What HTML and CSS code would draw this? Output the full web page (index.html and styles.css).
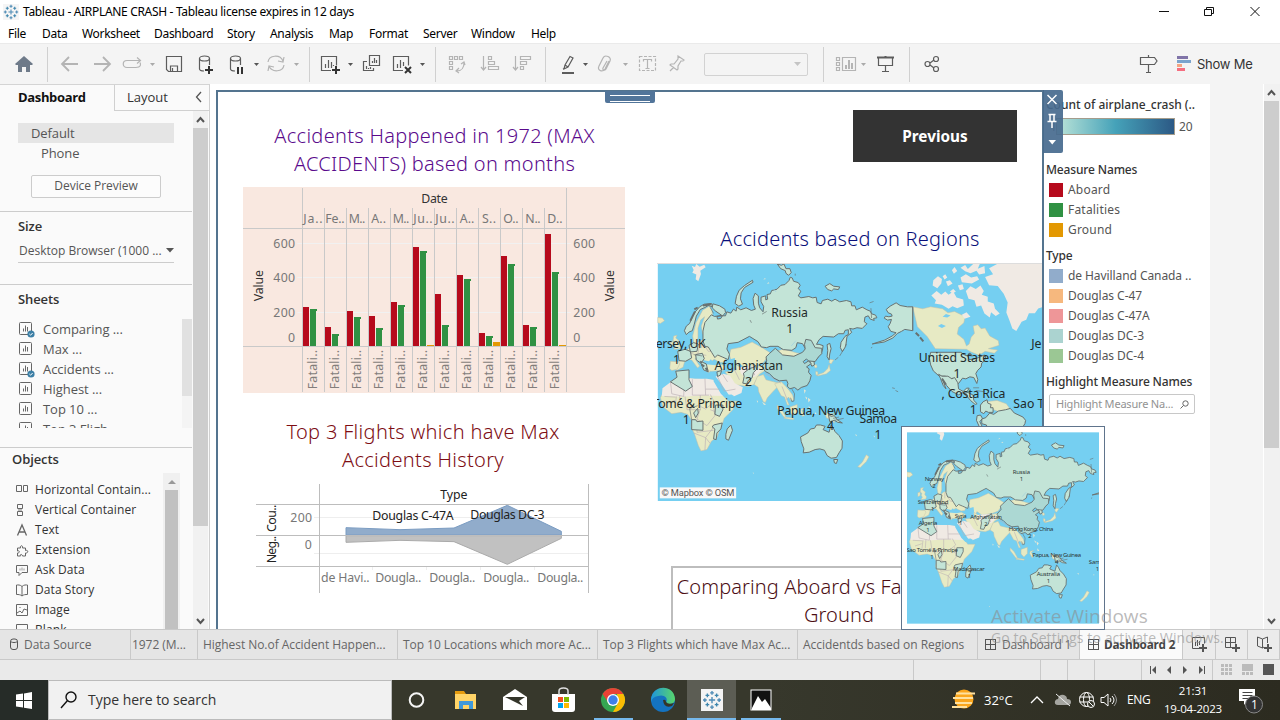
FILE: index.html
```html
<!DOCTYPE html>
<html lang="en">
<head>
<meta charset="utf-8">
<title>Tableau - AIRPLANE CRASH</title>
<link rel="stylesheet" href="styles.css">
</head>
<body>
<svg class="defs" width="0" height="0">
  <defs>
    <g id="snow" stroke-width="1.1" fill="none">
      <path stroke="#4e8bb5" d="M8 5.500v5M5.500 8h5M8 .8v3M6.500 2.300h3M8 12.200v3M6.500 13.700h3M.8 8h3M2.300 6.500v3M12.200 8h3M13.700 6.500v3"/>
      <path stroke="#3e86ad" d="M4.300 2.800v3M2.800 4.300h3M11.700 2.800v3M10.200 4.300h3M4.300 10.200v3M2.800 11.700h3M11.700 10.200v3M10.200 11.700h3"/>
    </g>
    <g id="sheet" fill="none" stroke="#666"><rect x=".5" y="1.500" width="12" height="12" rx="1"/><path d="M4.500 7.500v3M6.500 4.500v6M8.500 6v4.500"/></g>
    <g id="check"><circle cx="12" cy="13" r="3.600" fill="#3c7fa5"/><path d="M10.400 13l1.200 1.200 2-2.200" stroke="#fff" fill="none"/></g>
    <path id="tri" d="M0 0h5L2.500 3z"/>
    <g id="world" stroke-linejoin="round">
      <g fill="#e7eac4" stroke="#c3bfa5" stroke-width="1.500">
        <path d="M131 372l-4-24 10-40 20-38 20-12 8 12 4 34-6 26-14 10-12 2-4-24 10-28-12 10-8 24 0 30-6 22z"/>
        <path d="M84 398l24-6 14-14 16-6 12-10 26-6 12 10 12 20 18 20 10 4-4 16-14 2-18-10-16 12 8 20-8 8-12-8-10-24-12-14-8 4 14 22-6 6-18-24-14-2-8 10-4 14-20 10-8-16 8-10 16-4z"/>
        <path d="M60 424l24 2 4 6-8 16-16 4-6-6zM70 348l10-2-4 8 10 8-2 8 6 8-2 8-18 2 6-8-4-6 2-8-6-4zM60 364l8-2 0 12-8 4z"/>
        <path d="M158 436l24-8 30 4 14 8-8 12-34 2-24-4z"/>
        <path d="M238 405l4-17 30-6 34-16 32 18 22 14-10 16-10 14-20 8-36 6-18-12-6 14-14-10z"/>
        <path d="M375 395l26-8 40 12 26 4-2 12-36 14-36-4z"/>
        <path d="M255 432l24 16 22-6 38-6 6 16-18 12-16 30-16 6-44-6-26-38 18-2 16-4z"/>
        <path d="M322 470l18-6 8 16 46 12 4 14-16-4-12 12-18 20-6 14-6-2-14-30-2-14-12-8z"/>
        <path d="M374 492l20-6 14 14 10 12 10 14 4 14-8 4-8-12-6 6 8 18-6 0-8-24-10-4-10-18z"/>
        <path d="M382 556l14 14 12 22-6 0-20-26zM404 592l28 4-2 4-28-4zM420 562l22-8 0 22-12 12-10-10zM452 568l12-2-8 6 8 16-6 2-8-14zM524 576l12 6 16 0 2 28-12-10-12-6z"/>
        <path d="M42 510l26-20 32-14 38 2 34 2 24 2 18 34 20 28 26 0-12 26-26 26-8 24-8 16-6 18-16 10-14 26-18 4-8-16-12-36-10-20 2-20-12-18-20-6-28 4-26-20-8-28z"/>
        <path d="M790 260l30 6 24-6 36 6 16 12 20-4 20 10 12 4-4 20-16 14-4 20 20 16 8 20 8-6 6-20 10-12-4-22 14-4 10 12 12-2 14 24 26 14 2 14-32 10 28 4-10 10-28-6-18 12-24-10-14-8-94-2-24-36-30-30z"/>
        <path d="M1010 546l34-4 28 10 10 14-22 14-36-14z"/>
        <path d="M492 436l8-2 2 8-6 2zM540 418l12 2-8 12-6-4zM538 434l4 18-12 10-24 6-6-2 22-8 12-12zM498 454l6 2 0 12-6-4zM650 706l8 6-8 14-18 18-8-2 14-14zM22 292l14 2 6 8-12 8-8-2z"/>
      </g>
      <g fill="#f0eae4">
        <path d="M1008 170l24-8-12-18 24-13h136v130l-12 4-10 14-18 0-8 20-14 6-16 28-12-8-8-22-10-26 4-30-12-26-18-24-26-2z"/>
        <path d="M124 136l10 4 4-9 10 8 14-6 4 8-16 10 2 10-8 22-8-6 2-14-12-6 4-8z"/>
        <path d="M852 180l14-12 12 8-2 14-12 14-14-8zM880 168l8-6 6 10-8 6zM846 226l16-14 14 12 12-10 10 10 14-10 10 18 20 6 2 18-20 8-14-6-12 8-20-12-22-4 4-10zM890 184l12-4 8 10-14 8zM908 150l8-10 8 12-10 8zM926 196l14-4 4 14-12 4zM934 172l16-10 16 10 18-4 6 10-22 12-30-4zM934 142l14-8 8 12 16-15 20 0-6 14 20-8 2 22-18 4-8-12-18 8-16-6zM950 212l14-14 16 8 14-10 10 16-6 12 18 6 0 14 18 6 4 16 14 14-12 8-14-12-4 16-16-12-10-24-14 4-6-20-18-4zM938 284l14-8 12 14-18 6zM902 214l10-8 8 8-10 6z"/>
        <path d="M36 505l30-22 34-10 34 4 36 0 26 4 16 28 10 20-66-2-60 4-62-2zM196 470l24-8 20 6 14 22 24 12-4 18-24 10-14-4-24-36z"/>
        <path d="M268 442l36-4 34 10-22 22-28 6-16-16zM384 415l40-6 30 4-32 12-28-2z"/>
      </g>
      <path fill="#75cff1" d="M190 476l6 2 28 48 20-2 10 6-28 6-14-14-22-38z"/>
      <g fill="none" stroke="#bbb0b4" stroke-width="2">
        <path d="M60 482l4 40 36 8 2-54M126 478v48h50M164 476l2 50M166 508h42M78 530l-4 30M104 530l6 40 40 0 0-44M150 560l16 8 26-22-12-22M150 568l-10 30 30 20 24-30-6-36M140 598v40l50-6M130 640l36 14-2 38M166 654l26-34M166 654l14 18M42 530l34 2M50 550l24-8M86 558l2-30M180 570l26 10M202 470l20 44 34-6M216 462l16 24"/>
        <path d="M146 384l-4 20M160 372l14 22 18-2M136 402l32 4M154 364v20M248 440l20 40M304 440l10 26M130 402l-20-4M396 500l16 40M345 460l48 30"/>
      </g>
      <g fill="#78cef1"><path d="M240 418l14-4 2 14-2 14-8-2-6-12zM158 420l18 4 6-6 6 8 20 0 2 6-14 4-36-4zM866 318l10-6 14 6-12 6zM880 290l10-8 14 4-10 6zM938 396l20 0 10 10 30 8-36 4z"/></g>
      <g stroke="#687170" stroke-width="3" fill="#c3e4d7">
        <path d="M183 284l10 5 22-3-20-14-9-9 2-12 20 6 16 10 2 10-8 10-18 2 2 8 10-2 4-8 10 0 4-12 12 4 8-12 8 6 2-12 12 8 16-6 16 8 12-4-5-12-2-20 6-16 10 8 0 22 4 14 10 12 2-16-8-14 0-14 14-4 0 12 6-2-2-14 10-2 4-10 16-4 12-12 12-2 12-12 4-10 6 2 4 10 14 4 6 8-6 10 8 8-8 14 8 6 24-4 12 4 10-2 3 16 12 4 4-10 16-4 12 6 10-6 14 8 20-4 14 4 2 12 10 0 4 12 18-8 14 8 10 4 4 8 12 4 4 8-10 2 2 6-12-4-6-10-10 4-2 14 8 6-14 14-16-2-12 4-10-2 6 12-14 12-4 30-10 16-6-12 2-16 12-18 10-6 0-14-10 2-4 10-16 0-14 10-32-2-12 10-8 14 8 0 12 4-2 14-6 12-10 12-10 6 2 14-8 4-6-14 12-14 0-14-20-2-14-24-16-3-4 15-12 8-26-2-16-10-24 0-10 4-16-2-10-16-26-16-34 18-30 4-4 16 8 16-4 16-18-8-14-6-8 8-10-16-10-16-10-2-6-16 0-30 6-26z"/>
        <path d="M266 258l-11-8 4-22 8-18 16-14 24-16 2 6-26 16-10 16-2 18 6 16zM382 131l12 4 8-4 6 14 12 0 4 12-8 8-8-6-2-8-14-6zM526 198l14-8 12 8 18 2-4 8-14-2-6 6-12-4zM532 374l8-4 4 16-4 16-2 18-6-10 2-18z"/>
        <path d="M108 344l-6-12 6-14 10-8 8-20 8-14 14-16 14-8 22-2 2 10-12-4-10 6-14 6-12 20-6 24-6 20-10 4z"/>
        <path d="M82 394l22-6 16 6 4 20-18 10-20-2zM116 376l14-8 14 4-4 22-20 2zM136 404l20-4 6 16-10 14-14-10zM150 424l18 8 6 24-14-6zM200 456l14-4-4 14-8 4z"/>
        <path d="M60 486l20-14-4-18 40-4 0 30 10 20-20 14zM280 460l18-14 14-4 4-6 4 12-10 10-4 16-12 8-4 10-12-2 4-20zM196 556l22 0 0 14-10 20-14-6zM124 600l12 0 4 6 18-2 0 28-34-2zM130 580l12-14 2 14-8 14zM190 616l26-6-4 18-12 12-2 20-8-2 4-30-8-6zM242 616l5 16-12 30-8-4 0-14 4-16z"/>
        <path fill="#acd8d3" d="M358 401l-10 10 2 12-14 16 10 16 12 6 14 14 16 8 22-2 4 10-2 8 8 8 14-4 10 8 10-8 18-6 8-14 4-16-8-10 2-10-8-6 14-10-8-8-12 8-4-6 10-8 6 6 20 2 10-14 10-10 0-16-20-2-12-22-16-3-4 15 2 14-8 10-26 12-34-4-22-20z"/>
        <path d="M452 652l22-12 8-12 12-2 6-10 12 0 14 4-6 10 18 8 6-22 6 8 6 12 12 12 10 16-1 22-9 14-8 14-16 2-12-8-8-16-14-4-14 2-18 8-18 2 2-12-8-22zM552 720l12 0-4 12-6-2zM536 584l8 6 10-2 8 12 16 10-14-2-10-6-14 4z"/>
        <path d="M790 260l-16 0-22-4-12-8-18 10-12 10 6 10 10 4 2 6-10 2-10-2-4 6 10 6 12-2-4 12-6 10 8 14 16 4-12 10-22 12-38 12 36-6 26-12 14-14 12-6 10-6 24 4z"/>
        <path d="M844 397h92l6 6 14 6 4 10 16-2 12-4 18-8 4 6-4 12-8 6-2 12-10 10-6 10 6 18-3 12-9-18-12-2-12 6-10-2-12 16-4 0-12-16-12 2-12-8-18 0-18-16-8-18-4-20z"/>
        <path d="M868 463l10 6 18 0 12 8 8-4 10 16 2 18 14 8 10-10 8 0-6 10-10 2-16 8-20-10-16-18-12-18 10 28-8-10-8-20z"/>
        <path d="M944 522l12-4 16 8 2 16 10 10-6 2-14-12-8-10zM994 556l8-10 12-6 2 10 10 4-2 10 8 0 0 14-14 0-8-4-6 8-10-6zM1022 580l12 4 14-10 22-4 14-4 12 14 26 12 8 10-2 10-14 22-40 4-56 0-6-22-14-4 0-14 12-4zM984 588l10-2 6 10-8 10 8 16 20 16-16 0-14-18-8-18z"/>
      </g>
      <g fill="none" stroke="#687170" stroke-width="2">
        <path d="M664 264l2 30M790 260v72M980 512l26 4M972 504l18 0M668 382l-4 2M728 504l8 2M738 512l8 4M556 420l10-8M570 408l12-20M586 380l4-8M180 262l10 18M426 508l8 14-2 22-6 2-4-12M130 404l26 4M554 602l28-6M550 596l18-4M124 600l-6-34 24-8M660 248l12-4M300 300l4 8M336 282l14-8M436 166v-6"/>
        <path stroke-width="6" d="M799 338l10 10M812 352l10 12M132 268l10-6M158 256l24-4M154 434l8 6M166 444l6 8M878 476l12 18M120 302l14-28M960 400l8 8"/>
      </g>
      <g stroke="#9ccde0" stroke-width="2" fill="none"><path d="M424 378l14-16M370 205l8 10"/></g>
      <g fill="#e7e8d4"><path d="M320 542l4 2-2 6zM336 546l12 8-6 2zM474 534l8 6-6 8zM476 558l8 8-6 2zM494 582l4-4 2 6zM616 644l6 2-2 4zM308 759l4 2-3 2zM462 508l6 4-4 10zM466 530l6 4-2 6zM672 648l4 2-2 4zM350 190l6-4 2 4zM340 178l4-4 4 2z"/></g>
    </g>
  </defs>
</svg>

<header class="titlebar">
  <svg class="app-icon" width="16" height="16"><rect width="16" height="16" fill="#f5f5f5"/><use href="#snow"/></svg>
  <span class="app-title">Tableau - AIRPLANE CRASH - Tableau license expires in 12 days</span>
  <svg class="win-buttons" width="110" height="22" fill="none" stroke="#111"><path d="M9 10.500h10M54.500 8.500h7v6h-7zM56.500 8.500v-2h7v6h-2M100.500 6l9 9M109.500 6l-9 9"/></svg>
</header>
<nav class="menubar"><span>File</span><span>Data</span><span>Worksheet</span><span>Dashboard</span><span>Story</span><span>Analysis</span><span>Map</span><span>Format</span><span>Server</span><span>Window</span><span>Help</span></nav>

<div class="toolbar">
  <svg width="24" height="24"><path d="M3 12l9-8 9 8-1 1h-2v7h-4v-5h-4v5H6v-7H4z" fill="#6e7a89"/></svg>
  <i class="sep"></i>
  <svg class="dim" width="24" height="24"><path stroke-width="1.800" d="M20 12H5M11 5l-7 7 7 7"/></svg>
  <svg class="dim" width="24" height="24"><path stroke-width="1.800" d="M4 12h15M13 5l7 7-7 7"/></svg>
  <svg class="dim" width="24" height="24"><path d="M12 15.500H7c-5 0-5-7 0-7h13M16 15.500c5 0 5-3 4-5M17 5.500l3.500 3-3.500 3M12 15.500h5"/></svg>
  <svg class="dimfill" width="8" height="24"><use href="#tri" x="2" y="11"/></svg>
  <svg class="ink" width="24" height="24"><path d="M4.500 4.500h15v15h-13l-2-2zM8.500 19v-5h7v5M10.500 16v3"/></svg>
  <svg class="ink" width="24" height="24"><path d="M10 19c-3 0-4.500-1-4.500-2V6.500M15.500 13V6.500"/><ellipse cx="10.500" cy="6.500" rx="5" ry="2.500"/><path stroke-width="2" stroke="#333" d="M15 14v8M11 18h8"/></svg>
  <svg class="ink shift" width="24" height="24"><path d="M10 19c-3 0-4.500-1-4.500-2V6.500M15.500 13V6.500"/><ellipse cx="10.500" cy="6.500" rx="5" ry="2.500"/><path stroke-width="2" stroke="#333" d="M13 15v7M17 15v7"/></svg>
  <svg class="inkfill" width="8" height="24"><use href="#tri" x="2" y="11"/></svg>
  <svg class="dim" width="24" height="24"><path d="M4 10c1-7 12-8 15-1M20 13c-1 7-12 8-15 1M20 5l-1 5-5-1M4 19l1-5 5 1"/></svg>
  <svg class="dimfill" width="8" height="24"><use href="#tri" x="2" y="11"/></svg>
  <i class="sep"></i>
  <svg class="ink" width="24" height="24"><path d="M13 18.500H3.500v-14h15v9M7.500 12v4M10.500 8v8M13.500 10v6M15.500 13v1"/><path stroke="#333" stroke-width="2" d="M18 14v8M14 18h8"/></svg>
  <svg class="inkfill" width="8" height="24"><use href="#tri" x="2" y="11"/></svg>
  <svg class="ink" width="24" height="24"><path d="M10.500 3.500h10v10h-10zM13.500 9v2M15.500 6v5M17.500 8v3M8 9.500H4.500v9h10V16M7.500 14v3M9.500 16v1M11.500 15v2"/></svg>
  <svg class="ink" width="24" height="24"><path d="M13 18.500H3.500v-14h15v9M7.500 12v4M10.500 8v8M13.500 10v4"/><path stroke="#333" stroke-width="2" d="M15 15l6 6M21 15l-6 6"/></svg>
  <svg class="inkfill" width="8" height="24"><use href="#tri" x="2" y="11"/></svg>
  <i class="sep"></i>
  <svg class="dim" width="24" height="24"><path d="M4.500 4.500h3v3h-3zM9.500 4.500h3v3h-3zM14.500 4.500h3v3h-3zM4.500 9.500h3v3h-3zM4.500 14.500h3v3h-3zM12 19c5 0 7-4 7-8M14 16l-3 3 3 2M16 12l3-2 1 3"/></svg>
  <svg class="dim" width="24" height="24"><path d="M5.500 4v14M3 15l2.500 3 2.500-3M10.500 4.500h3v3h-3zM10.500 9.500h6v3h-6zM10.500 14.500h10v3h-10z"/></svg>
  <svg class="dim" width="24" height="24"><path d="M5.500 4v14M3 15l2.500 3 2.500-3M10.500 4.500h10v3h-10zM10.500 9.500h6v3h-6zM10.500 14.500h3v3h-3z"/></svg>
  <i class="sep"></i>
  <svg class="ink" width="24" height="24"><path d="M9 13l5-8.500 3 1.500-5 9-4 2zM9 13l3 2M7 17l2-1"/><path stroke-width="2" d="M6 21h12"/></svg>
  <svg class="inkfill" width="8" height="24"><use href="#tri" x="2" y="11"/></svg>
  <svg class="dim" width="24" height="24"><path d="M16 9l-4 8c-3 4-8 1-6-3l4-8c2-4 9-1 7 3l-4 8c-1 2-4 1-3-1l4-7"/></svg>
  <svg class="dimfill" width="8" height="24"><use href="#tri" x="2" y="11"/></svg>
  <svg class="dim" width="24" height="24"><path stroke-dasharray="3 1.500" d="M4.500 4.500h16v14h-16z"/><path d="M8.500 9.500V7.500h8v2M12.500 7.500v9M10.500 16.500h4"/></svg>
  <svg class="dim" width="24" height="24"><path d="M13 4l6 4-1 1-2 0-3 5 0 3-1 1-7-5 1-1 3 0 4-5zM9 15l-4 4"/></svg>
  <span class="fit-select"><svg width="8" height="6" fill="#c4c4c4"><path d="M0 1h7L3.500 5z"/></svg></span>
  <i class="sep"></i>
  <svg class="dim" width="24" height="24"><path d="M2.500 5.500h3v3h-3zM2.500 10.500h3v3h-3zM2.500 15.500h3v3h-3zM8.500 5.500h13v13h-13z"/><path stroke-width="2" d="M12 13v4M15 8v9M18 11v6"/></svg>
  <svg class="dimfill" width="8" height="24"><use href="#tri" x="2" y="11"/></svg>
  <svg class="ink" width="24" height="24"><path stroke-width="2" d="M4 5.500h17M12.500 4v2"/><path d="M5.500 6v7.500h14V6M12.500 14v5M9 19.500h7"/></svg>
  <i class="sep"></i>
  <svg class="ink" width="24" height="24"><circle cx="7.500" cy="12" r="2.500"/><circle cx="16" cy="7" r="2.500"/><circle cx="16" cy="17" r="2.500"/><path d="M10 11l4-3M10 13l4 3"/></svg>
  <svg class="ink" width="24" height="24"><path d="M4.500 5.500h14l2.500 3.500-2.500 3.500h-14zM12.500 3v2M12.500 13v7M10 20.500h5"/></svg>
  <span class="show-me"><svg width="15" height="16"><path fill="#8074a8" d="M0 0h11v3H0z"/><path fill="#7ba3cc" d="M0 4h14v3H0z"/><path fill="#f4a582" d="M0 8h5v3H0z"/><path fill="#f56e80" d="M0 12h8v3H0z"/></svg>Show Me</span>
</div>

<main class="workspace">
  <aside class="sidebar">
    <div class="side-tabs"><b>Dashboard</b><span>Layout</span><svg width="8" height="12" fill="none" stroke="#555" stroke-width="1.300"><path d="M6 1L1.500 6 6 11"/></svg></div>
    <div class="side-body">
      <div class="side-panels">
        <section class="devices"><div class="device on">Default</div><div class="device phone">Phone</div><div class="preview">Device Preview</div></section>
        <section class="size"><h3>Size</h3><div class="size-select"><span>Desktop Browser (1000 ...</span><svg width="8" height="5" fill="#555"><path d="M0 0h8L4 4.500z"/></svg></div></section>
        <section class="sheets"><h3>Sheets</h3>
          <div class="sheet-box"><ul>
            <li><svg width="16" height="16"><use href="#sheet"/><use href="#check"/></svg>Comparing ...</li>
            <li><svg width="16" height="16"><use href="#sheet"/></svg>Max ...</li>
            <li><svg width="16" height="16"><use href="#sheet"/><use href="#check"/></svg>Accidents ...</li>
            <li><svg width="16" height="16"><use href="#sheet"/></svg>Highest ...</li>
            <li><svg width="16" height="16"><use href="#sheet"/></svg>Top 10 ...</li>
            <li><svg width="16" height="16"><use href="#sheet"/></svg>Top 3 Fligh...</li>
          </ul><i class="mini-bar"></i></div>
        </section>
        <section class="objects"><h3>Objects</h3>
          <div class="object-box"><ul>
            <li><svg width="13" height="13"><path d="M.5 1.500h5v6h-5zM7.500 1.500h4v6h-4z"/></svg>Horizontal Contain...</li>
            <li><svg width="13" height="13"><path d="M1.500.5h5v4h-5zM1.500 7.500h5v4h-5z"/><path d="M2 6h4" stroke-width="2" stroke="#bbb"/></svg>Vertical Container</li>
            <li><svg width="13" height="13"><path d="M1.500 11.500L6 1l4.500 10.500M3 8h6" stroke-width="1.300"/></svg>Text</li>
            <li><svg width="13" height="13"><path d="M1.500 4h3c-1-3 3-3 2 0h3v2.500c3-1 3 3 0 2.500V12H6.500c0-2-3-2-2 0h-3V9c3 0 2-3 0-2z"/></svg>Extension</li>
            <li><svg width="13" height="13"><path d="M.5 1.500h11v7H6l-3 3v-3H.5z"/><path d="M4 6.500v-2M6 6.500v-3M8 6.500v-2" stroke="#999"/></svg>Ask Data</li>
            <li><svg width="13" height="13"><path d="M6 2.500C4 .5 2 1 .5 1v9.500c2 0 4 0 5.500 1.500 1.500-1.500 3.500-1.500 5.500-1.500V1C10 1 8 .5 6 2.500zV12"/></svg>Data Story</li>
            <li><svg width="13" height="13"><path d="M.5.5h11v11H.5zM1 9l3-2 2 2 2-4 3 1M4 3v1"/></svg>Image</li>
            <li><svg width="13" height="13"><path d="M.5.5h11v11H.5z"/></svg>Blank</li>
          </ul><i class="object-bar"><svg width="8" height="5" fill="#999"><path d="M4 0l4 4H0z"/></svg></i></div>
        </section>
      </div>
      <div class="scroll side-scroll"><svg width="16" height="17"><path d="M4 11l3.500-4 3.500 4"/></svg><i></i><svg width="16" height="17"><path d="M4 7l3.500 4L11 7"/></svg></div>
    </div>
  </aside>

  <div class="canvas">
    <div class="board">
      <div class="board-left">
        <h2 class="purple">Accidents Happened in 1972 (MAX<br>ACCIDENTS) based on months</h2>
        <svg class="months" viewBox="24 216 1146 618" width="382" height="206">
          <rect x="24" y="216" width="1146" height="618" fill="#f9e8e0"/>
          <g stroke="#f1f1f1" stroke-width="3"><path d="M187 385.500h820M187 487.500h820M187 592.500h820"/></g>
          <g stroke="#c9c9c9" stroke-width="3" fill="none"><path d="M202.500 219v612M994.500 219v612M24 340.500h1146M24 694.500h1146M268.500 279v552M334.500 279v552M400.500 279v552M466.500 279v552M532.500 279v552M598.500 279v552M664.500 279v552M730.500 279v552M796.500 279v552M862.500 279v552M928.500 279v552"/></g>
          <path fill="#b60a1c" d="M204 576h18v117h-18zM270 636h18v57h-18zM336 588h18v105h-18zM402 603h18v90h-18zM468 561h18v132h-18zM534 396h18v297h-18zM600 537h18v156h-18zM666 480h18v213h-18zM732 654h18v39h-18zM798 423h18v270h-18zM864 630h18v63h-18zM930 357h18v336h-18z"/>
          <path fill="#309143" d="M225 582h21v6h-3v105h-18zM291 657h21v6h-3v30h-18zM357 606h21v6h-3v81h-18zM423 639h21v6h-3v48h-18zM489 570h21v6h-3v117h-18zM555 408h21v6h-3v279h-18zM621 630h21v6h-3v57h-18zM687 492h21v6h-3v195h-18zM753 663h21v6h-3v24h-18zM819 447h21v6h-3v240h-18zM885 636h21v6h-3v51h-18zM951 471h21v6h-3v216h-18z"/>
          <path fill="#e39802" d="M576 690h21v3h-21zM774 681h21v12h-21zM972 690h21v3h-21z"/>
          <g class="svg-text" font-size="37">
            <text x="559" y="264" textLength="79" fill="#333">Date</text>
            <g fill="#777"><text x="205" y="324" textLength="58">Ja..</text><text x="271" y="324" textLength="58">Fe..</text><text x="341" y="324" textLength="50">M..</text><text x="409" y="324" textLength="44">A..</text><text x="473" y="324" textLength="50">M..</text><text x="535" y="324" textLength="58">Ju..</text><text x="601" y="324" textLength="58">Ju..</text><text x="674" y="324" textLength="44">A..</text><text x="741" y="324" textLength="42">S..</text><text x="805" y="324" textLength="46">O..</text><text x="871" y="324" textLength="46">N..</text><text x="937" y="324" textLength="46">D..</text>
            <text x="115" y="399" textLength="65">600</text><text x="115" y="501" textLength="65">400</text><text x="115" y="606" textLength="65">200</text><text x="159" y="681">0</text><text x="1015" y="399" textLength="65">600</text><text x="1015" y="501" textLength="65">400</text><text x="1015" y="606" textLength="65">200</text><text x="1015" y="681">0</text></g>
            <g fill="#333"><text transform="translate(84 559) rotate(-90)" textLength="94">Value</text><text transform="translate(1137 559) rotate(-90)" textLength="94">Value</text></g>
            <g fill="#827d7b"><text transform="translate(246 823) rotate(-90)" textLength="118">Fatali..</text><text transform="translate(312 823) rotate(-90)" textLength="118">Fatali..</text><text transform="translate(378 823) rotate(-90)" textLength="118">Fatali..</text><text transform="translate(444 823) rotate(-90)" textLength="118">Fatali..</text><text transform="translate(510 823) rotate(-90)" textLength="118">Fatali..</text><text transform="translate(576 823) rotate(-90)" textLength="118">Fatali..</text><text transform="translate(642 823) rotate(-90)" textLength="118">Fatali..</text><text transform="translate(708 823) rotate(-90)" textLength="118">Fatali..</text><text transform="translate(774 823) rotate(-90)" textLength="118">Fatali..</text><text transform="translate(840 823) rotate(-90)" textLength="118">Fatali..</text><text transform="translate(906 823) rotate(-90)" textLength="118">Fatali..</text><text transform="translate(972 823) rotate(-90)" textLength="118">Fatali..</text></g>
          </g>
        </svg>
        <h2 class="maroon">Top 3 Flights which have Max<br>Accidents History</h2>
        <svg class="flights" viewBox="63 207 999 327" width="333" height="109">
          <path stroke="#eee" stroke-width="3" d="M237 307.500h822M237 415.500h822M412.500 456v9M574.500 456v9M736.500 456v9M898.500 456v9"/>
          <path fill="#91accb" stroke="#7b9cc2" stroke-width="3" d="M333 360v-22l162 6 162-5 160-68 162 78v11z"/>
          <path fill="#c1c1c1" stroke="#aaa" stroke-width="3" d="M333 362v20l162-6 162 4 160 68 162-78v-8z"/>
          <path stroke="#bdbdbd" stroke-width="3" fill="none" d="M253.500 207v327M1060.500 207v327M63 268.500h998M63 361.500h998M63 454.500h998"/>
          <g class="svg-text" font-size="37">
            <g fill="#222"><text x="616" y="252" textLength="81">Type</text><text x="412" y="315" textLength="244">Douglas C-47A</text><text x="706" y="312" textLength="223">Douglas DC-3</text><text transform="translate(124 351) rotate(-90)" textLength="82">Cou..</text><text transform="translate(124 445) rotate(-90)" textLength="82">Neg..</text></g>
            <g fill="#777"><text x="166" y="320" textLength="65">200</text><text x="209" y="402">0</text><text x="258" y="501" textLength="146">de Havi..</text><text x="421" y="501" textLength="138">Dougla..</text><text x="583" y="501" textLength="138">Dougla..</text><text x="745" y="501" textLength="138">Dougla..</text><text x="907" y="501" textLength="138">Dougla..</text></g>
          </g>
        </svg>
      </div>
      <div class="board-right">
        <div class="previous">Previous</div>
        <h2 class="navy">Accidents based on Regions</h2>
        <svg class="map" viewBox="22 131 1158 714" width="386" height="238">
          <rect x="22" y="131" width="1158" height="714" fill="#75cff1"/>
          <use href="#world"/>
          <g class="svg-text" font-size="37" fill="#1f2a2a">
            <text x="364" y="292" textLength="110">Russia</text><text x="409" y="340">1</text>
            <text x="16" y="384" textLength="150">ersey, UK</text><text x="68" y="432">1</text>
            <text x="193" y="451" textLength="206">Afghanistan</text><text x="285" y="499">2</text>
            <text x="6" y="565" textLength="270">Tomé &amp; Principe</text><text x="97" y="612">1</text>
            <text x="382" y="586" textLength="325">Papua, New Guinea</text><text x="532" y="632">4</text>
            <text x="630" y="610" textLength="113">Samoa</text><text x="675" y="658">1</text>
            <text x="808" y="426" textLength="230">United States</text><text x="913" y="474">1</text>
            <text x="877" y="535" textLength="192">, Costa Rica</text><text x="962" y="583">1</text>
            <text x="1147" y="384">Jersey</text><text x="1093" y="565">Sao Tomé</text>
          </g>
          <rect x="28" y="804" width="230" height="33" fill="#f8f8f8"/>
          <text class="map-credit" x="33" y="831" font-size="28" textLength="220" fill="#555">© Mapbox © OSM</text>
        </svg>
        <div class="comparing"><h2 class="dark-red">Comparing Aboard vs Fatalities and<br>Ground</h2></div>
      </div>
      <div class="grip"></div>
      <div class="board-tools"><svg width="20" height="63" fill="none" stroke="#fff" stroke-width="1.500"><path d="M4.500 5l9 9M13.500 5l-9 9M5.500 24.500h7M7 25v6M11 25v6M4.500 31.500h9M9 32v6"/><path stroke="none" fill="#fff" d="M5.500 50h7.500l-3.750 4.500z"/></svg></div>
    </div>
    <div class="legend">
      <h4 class="loose">Count of airplane_crash (..</h4>
      <div class="ramp"><span>1</span><i></i><span>20</span></div>
      <h4>Measure Names</h4>
      <ul><li><i class="sw red"></i>Aboard</li><li><i class="sw green"></i>Fatalities</li><li><i class="sw gold"></i>Ground</li></ul>
      <h4>Type</h4>
      <ul><li><i class="sw blue"></i><span class="snug">de Havilland Canada ..</span></li><li><i class="sw orange"></i><span class="near">Douglas C-47</span></li><li><i class="sw pink"></i><span class="near">Douglas C-47A</span></li><li><i class="sw teal"></i><span class="near">Douglas DC-3</span></li><li><i class="sw lime"></i><span class="near">Douglas DC-4</span></li></ul>
      <h4 class="tight">Highlight Measure Names</h4>
      <div class="highlight"><span>Highlight Measure Na...</span><svg width="9" height="9" fill="none" stroke="#666"><circle cx="5.500" cy="3.500" r="2.700"/><path d="M3.500 5.500L.5 8.500"/></svg></div>
    </div>
    <div class="void"></div>
    <div class="scroll main-scroll"><svg width="17" height="17"><path d="M4 11l3.500-4 3.500 4"/></svg><i></i><svg width="17" height="17"><path d="M4 7l3.500 4L11 7"/></svg></div>
  </div>
</main>

<div class="tabs">
  <span><svg width="9" height="13" fill="none" stroke="#555"><rect x=".5" y="1" width="7" height="10.500" rx="2.500"/><path d="M.5 3c0 2 7 2 7 0"/></svg>Data Source</span><span>1972 (M...</span><span>Highest No.of Accident Happen...</span><span>Top 10 Locations which more Ac...</span><span>Top 3 Flights which have Max Ac...</span><span>Accidentds based on Regions</span>
  <span><svg width="12" height="12" fill="none" stroke="#555"><rect x=".5" y=".5" width="10" height="10"/><path d="M5.500 0v11M0 5.500h11"/></svg>Dashboard 1</span>
  <span class="active"><svg width="12" height="12" fill="none" stroke="#555"><rect x=".5" y=".5" width="10" height="10"/><path d="M5.500 0v11M0 5.500h11"/></svg>Dashboard 2</span>
  <span class="add"><svg width="16" height="17" fill="none" stroke="#555"><path d="M8 12.500H1.500v-11h12v6M4.500 6v4M6.500 4v6M8.500 5v4"/><path stroke-width="2" d="M12 8v8M8 12h8"/></svg></span>
  <span class="add"><svg width="16" height="17" fill="none" stroke="#555"><path d="M8 11.500H1.500v-10h10v6M6.500 1v10M1 6.500h10"/><path stroke-width="2" d="M12 8v8M8 12h8"/></svg></span>
  <span class="add"><svg width="16" height="17" fill="none" stroke="#555"><path d="M8 11l-1.500 1L1.500 10V1l5 2 5-2v6M6.500 3v9"/><path stroke-width="2" d="M12 8v8M8 12h8"/></svg></span>
</div>
<div class="status">
  <i></i><i></i><i></i><i></i><i></i>
  <span><svg width="60" height="11" fill="#555"><path d="M3 1h1v8H3zM9 1v8L5 5zM24 1v8l-4-4zM36 1v8l4-4zM52 1v8l4-4zM57 1h1v8h-1z"/></svg></span>
  <span class="views"><svg width="56" height="12"><path fill="#bbb" d="M1 0h3v3H1zM5 0h3v3H5zM9 0h3v3H9zM1 4h3v3H1zM5 4h3v3H5zM9 4h3v3H9zM1 8h3v3H1zM5 8h3v3H5zM9 8h3v3H9zM22 0h11v7H22zM22 8h3v3h-3zM26 8h3v3h-3zM30 8h3v3h-3z"/><path fill="#555" d="M43 0h11v11H43z"/></svg></span>
</div>

<footer class="taskbar">
  <div class="start"><svg width="17" height="17" fill="#fff"><path d="M0 2.500L7 1.500V8H0zM8 1.400L16 0v8H8zM0 9h7v6.500l-7-1zM8 9h8v8l-8-1.200z"/></svg></div>
  <div class="search"><svg width="18" height="18" fill="none" stroke="#111" stroke-width="1.400"><circle cx="11" cy="6" r="5"/><path d="M7.500 9.500L1 17"/></svg>Type here to search</div>
  <div class="app"><svg width="20" height="20"><circle cx="9.500" cy="10" r="6.800" fill="none" stroke="#f5f5f5" stroke-width="2"/></svg></div>
  <div class="app"><svg width="24" height="20"><path fill="#e59b0f" d="M1 1h9l2 3H1z"/><path fill="#ffd468" d="M1 4h21v15H1z"/><path fill="#3f98da" d="M5 19v-8h14v8h-4v-4H9v4z"/></svg></div>
  <div class="app"><svg width="26" height="22"><path fill="#fff" d="M1 8l12-8 12 8v13H1z"/><path fill="#34352a" d="M3 8h20l-6 4 4 5-8-4z"/></svg></div>
  <div class="app"><svg width="24" height="26"><path fill="#fff" d="M0 7h23v15q0 3-3 3H3q-3 0-3-3z"/><path d="M7 8V4q0-3 4.500-3T16 4v4" fill="none" stroke="#ddd" stroke-width="1.500"/><path fill="#f25022" d="M6 10h5v5H6z"/><path fill="#7fba00" d="M12 10h5v5h-5z"/><path fill="#00a4ef" d="M6 16h5v5H6z"/><path fill="#ffb900" d="M12 16h5v5h-5z"/></svg></div>
  <div class="app run"><svg width="24" height="24"><circle cx="12" cy="12" r="12" fill="#35a652"/><path fill="#e94235" d="M1.600 6A12 12 0 0 1 22.400 6H12L7 14z"/><path fill="#fbbc04" d="M22.400 6A12 12 0 0 1 12 24l5-9-1-9z"/><circle cx="12" cy="12" r="6" fill="#fff"/><circle cx="12" cy="12" r="4.700" fill="#3f7fe9"/></svg></div>
  <div class="app"><svg width="24" height="24"><defs><linearGradient id="edge-a" x1="0" x2="1"><stop stop-color="#1e94dc"/><stop offset="1" stop-color="#59d66a"/></linearGradient></defs><circle cx="12" cy="12" r="12" fill="#1473c0"/><path fill="url(#edge-a)" d="M0 12C1-4 23-4 24 11c0 6-8 6-9 4 3-6-3-9-8-7Q1 9 0 14z"/><path fill="#34352a" d="M12 12q3-1 3 2 2 3 8 1l-2 3q-8 3-9-6z"/></svg></div>
  <div class="app run active"><svg width="22" height="22"><rect width="22" height="22" fill="#f4f4f4"/><use href="#snow" transform="translate(1 1) scale(1.250)"/></svg></div>
  <div class="app run photos"><svg width="22" height="22"><rect x="1" y="1" width="20" height="20" fill="#111" stroke="#fff"/><path fill="#fff" d="M2 19l6-12 4 6 3-3 6 9v2H2z"/></svg></div>
  <div class="tray">
    <svg width="25" height="24"><circle cx="13" cy="11" r="9.500" fill="#fba61c"/><path stroke="#ffe1a0" stroke-width="2" d="M5 5.500h19M2 10h20M4 15h17M1 19h15"/></svg>
    <span class="temp">32°C</span>
    <svg width="14" height="10" fill="none" stroke="#fff" stroke-width="1.300"><path d="M1 8l6-6 6 6"/></svg>
    <svg width="18" height="16"><path fill="#a5a5a0" d="M4 13q-4 0-3-4 1-2 3-2 1-5 6-4 3 1 3 4 4 0 4 3t-3 3z"/><path stroke="#eee" d="M2 2l14 12"/></svg>
    <svg width="18" height="18" fill="none" stroke="#fff"><circle cx="8.500" cy="8.500" r="7"/><ellipse cx="8.500" cy="8.500" rx="3" ry="7"/><path d="M1.500 6h14M1.500 11h14"/><circle cx="13" cy="13" r="3.500" fill="#34352a"/><path d="M11 11l4 4"/></svg>
    <svg width="18" height="16" fill="none" stroke="#fff"><path d="M1 5.500h3L8 2v12l-4-3.500H1zM10 6q2 2 0 4M12 4q4 4 0 8"/><path stroke="#999" d="M14 2q5 6 0 12"/></svg>
    <span class="lang">ENG</span>
    <span class="clock">21:31<br>19-04-2023</span>
    <svg width="26" height="26"><path fill="#fff" d="M1 2h16v12H9l-3 4v-4H1z"/><path stroke="#444" d="M4.500 5.500h10M4.500 8.500h10M4.500 11.500h6"/><circle cx="16" cy="17.500" r="8.500" fill="#333" stroke="#888"/><text x="13" y="22" class="badge">1</text></svg>
  </div>
</footer>

<div class="inset">
  <svg viewBox="36 37 576 574" width="192" height="192">
    <rect x="36" y="37" width="576" height="574" fill="#75cff1"/>
    <use href="#world" transform="translate(17 -95) scale(.86)"/>
    <g class="svg-text" font-size="18" fill="#2c3737">
      <text x="353" y="161" textLength="52">Russia</text><text x="374" y="182">1</text>
      <text x="89" y="182" textLength="58">Norway</text><text x="112" y="203">2</text>
      <text x="68" y="251" textLength="92">Switzerland</text><text x="108" y="272">1</text>
      <text x="179" y="293" textLength="36">Syria</text><text x="192" y="314">1</text>
      <text x="226" y="297" textLength="95">Afghanistan</text><text x="268" y="318">2</text>
      <text x="71" y="315" textLength="56">Algeria</text><text x="94" y="336">1</text>
      <text x="341" y="333" textLength="134">Hong Kong, China</text><text x="400" y="354">2</text>
      <text x="34" y="395" textLength="155">Sao Tomé &amp; Principe</text><text x="106" y="416">1</text>
      <text x="412" y="411" textLength="146">Papua, New Guinea</text><text x="480" y="432">4</text>
      <text x="174" y="452" textLength="95">Madagascar</text><text x="218" y="473">1</text>
      <text x="425" y="467" textLength="70">Australia</text><text x="455" y="488">1</text>
      <text x="581" y="433">Samoa</text><text x="602" y="454">1</text>
    </g>
  </svg>
</div>
<div class="watermark"><p>Activate Windows</p><small>Go to Settings to activate Windows.</small></div>
</body>
</html>
```
FILE: styles.css
```css
* { box-sizing: border-box; }
body { margin: 0; width: 1280px; height: 720px; overflow: hidden; background: #fff; font: 12px/16px "Noto Sans", "Open Sans", sans-serif; color: #333; display: flex; flex-direction: column; position: relative; }
h2, h3, h4, ul, p { margin: 0; padding: 0; font-weight: 400; }
ul { list-style: none; }
svg { display: block; flex: none; overflow: visible; }
.defs { position: absolute; overflow: hidden; }
.svg-text { font-family: "Noto Sans", "Open Sans", sans-serif; }
.map-credit { font-family: Roboto, sans-serif; }

.titlebar { height: 24px; flex: none; display: flex; align-items: center; padding-left: 3px; color: #000; }
.app-title { margin-left: 4px; font-size: 12px; letter-spacing: -.32px; white-space: nowrap; }
.win-buttons { margin-left: auto; margin-right: 20px; }
.menubar { height: 19px; flex: none; display: grid; grid-template-columns: 34px 40px 72px 73px 43px 59px 40px 54px 48px 60px 60px; padding: 2px 0 0 8px; color: #000; letter-spacing: -.3px; }

.toolbar { height: 41px; flex: none; background: #f4f4f4; border-top: 1px solid #eaeaea; display: grid; align-items: center; padding-left: 12px; grid-template-columns: 35px 11px 32px 30px 28px 14px 32px 30px 28px 12px 28px 17px 9px 28px 13px 31px 28px 17px 10px 33px 32px 35px 11px 25px 12px 28px 14px 30px 39px 119px 11px 25px 14px 36px 11px 216px 41px 1fr; }
.sep { width: 1px; height: 35px; background: #d0d0d0; }
.dim { fill: none; stroke: #b4b4b4; stroke-width: 1.2; }
.ink { fill: none; stroke: #5c5c5c; stroke-width: 1.2; }
.shift { margin-left: 1px; }
.dimfill { fill: #aaa; }
.inkfill { fill: #555; }
.fit-select { width: 104px; height: 23px; border: 1px solid #d2d2d2; border-radius: 2px; display: flex; align-items: center; justify-content: flex-end; padding-right: 5px; }
.show-me { display: flex; align-items: center; gap: 5px; font: 13px "Inter", sans-serif; letter-spacing: -.25px; color: #333; white-space: nowrap; }

.workspace { height: 545px; flex: none; display: flex; }
.sidebar { width: 210px; flex: none; background: #fafafa; border-right: 1px solid #d0d0d0; border-top: 1px solid #d4d4d4; display: flex; flex-direction: column; font-family: "Open Sans", sans-serif; }
.side-tabs { height: 26px; flex: none; display: flex; font-size: 13px; line-height: 25px; }
.side-tabs b { width: 114px; padding-left: 18px; color: #111; letter-spacing: -.35px; }
.side-tabs span { flex: 1; border: 1px solid #d0d0d0; border-width: 0 0 1px 1px; padding-left: 12px; }
.side-tabs svg { width: 14px; height: 26px; padding-top: 6px; border-bottom: 1px solid #d0d0d0; }
.side-body { height: 518px; display: flex; overflow: hidden; }
.side-panels { width: 192px; flex: none; overflow: hidden; }
.side-panels section { border-bottom: 1px solid #ccc; }
.devices { height: 101px; padding: 12px 18px 0; font-size: 13px; line-height: 20px; color: #555; }
.device { padding-left: 13px; letter-spacing: -.1px; }
.device.on { background: #e5e5e5; }
.device.phone { padding-left: 23px; }
.preview { margin: 12px 13px 0; height: 23px; border: 1px solid #ccc; border-radius: 2px; font-size: 12px; line-height: 20px; text-align: center; background: #fcfcfc; letter-spacing: -.05px; }
.side-panels h3 { font-size: 13px; font-weight: 600; line-height: 18px; color: #333; letter-spacing: -.1px; }
.size { height: 73px; padding: 5px 18px 0; }
.size-select { margin-top: 5px; height: 23px; border-bottom: 1px solid #ccc; display: flex; align-items: center; gap: 5px; font-size: 12px; padding: 0 0 1px 1px; color: #555; white-space: nowrap; }
.size-select span { width: 142px; }
.sheets { height: 163px; padding-top: 5px; }
.sheets h3 { padding-left: 18px; }
.sheet-box { height: 109px; margin-top: 11px; display: flex; overflow: hidden; padding-left: 19px; }
.sheet-box ul { width: 163px; }
.sheet-box li { height: 20px; display: flex; align-items: center; gap: 8px; font-size: 13px; color: #555; letter-spacing: -.05px; }
.mini-bar { width: 10px; height: 109px; background: linear-gradient(#e1e1e1 77px, #f4f4f4 77px); }
.side-panels .objects { height: 190px; padding-top: 2px; border: 0; }
.objects h3 { padding-left: 12px; }
.object-box { margin-top: 5px; display: flex; padding-left: 16px; }
.object-box ul { width: 147px; padding-top: 7px; }
.object-box li { height: 20px; display: flex; align-items: center; gap: 6px; font-size: 12px; white-space: nowrap; color: #333; letter-spacing: .08px; }
.object-box svg { fill: none; stroke: #666; }
.object-bar { width: 17px; height: 160px; background: linear-gradient(90deg, #f0f0f0 2px, #c1c1c1 2px 15px, #f0f0f0 15px) 0 17px no-repeat #f0f0f0; padding: 7px 5px; }
.object-box .object-bar svg { fill: #999; stroke: none; }
.scroll { background: #f1f1f1; display: flex; flex-direction: column; }
.scroll svg { fill: none; stroke: #555; stroke-width: 2; }
.side-scroll { width: 15px; margin-left: 1px; }
.side-scroll i { height: 398px; background: #cdcdcd; margin-bottom: auto; }

.canvas { flex: 1; display: flex; padding-left: 6px; }
.board { width: 828px; height: 539px; flex: none; margin-top: 6px; border: 2px solid #54748f; border-bottom: 0; position: relative; display: flex; }
.board h2 { font: 300 20px/28px "Noto Sans", "Open Sans", sans-serif; text-align: center; white-space: nowrap; }
.board-left { width: 432px; padding: 30px 0 0 25px; overflow: hidden; height: 537px; }
.board .purple { width: 383px; color: #5a0a8c; letter-spacing: .29px; }
.months { margin: 9px 0 25px; }
.board .maroon { width: 360px; color: #7d0d14; letter-spacing: .33px; }
.flights { margin: 10px 0 0 13px; }
.board-right { width: 392px; height: 537px; padding: 18px 0 0 7px; overflow: hidden; }
.previous { width: 164px; height: 52px; margin-left: 196px; background: #333; color: #fff; font: 700 15.3px/52px "Noto Sans", sans-serif; text-align: center; }
.board .navy { margin: 63px 0 10px; color: #0a0f7a; width: 386px; letter-spacing: .2px; }
.map { border-top: 1px solid #ddd; overflow: hidden; }
.comparing { margin: 65px 0 0 14px; width: 372px; height: 70px; border: 2px solid #bdbdbd; padding-top: 5px; }
.comparing h2 { width: 332px; color: #4c0e14; letter-spacing: .1px; }
.grip { position: absolute; left: 387px; top: -1px; width: 50px; height: 12px; background: #52759a; border-radius: 0 0 2px 2px; padding: 4px 5px; }
.grip::before { content: ""; display: block; height: 5px; border: 1px solid #fff; border-width: 1px 0; }
.board-tools { position: absolute; z-index: 2; left: 825px; top: -2px; width: 20px; height: 63px; background: rgba(71, 106, 142, .92); border-radius: 0 2px 2px 0; }
.legend { width: 166px; padding: 13px 0 0 2px; white-space: nowrap; color: #555; }
.legend h4 { font-size: 12px; line-height: 16px; color: #333; font-weight: 500; letter-spacing: -.15px; }
.legend .loose { letter-spacing: 0; }
.ramp { display: flex; height: 17px; margin: 5px 0 27px; line-height: 17px; }
.ramp span:first-child { width: 10px; padding-left: 4px; }
.ramp i { width: 119px; margin-right: 4px; border: 1px solid #a49c8c; background: linear-gradient(90deg, #bce4d8, #45a2b9 50%, #2c5985); }
.legend ul { margin: 2px 0 8px 3px; }
.legend li { height: 20px; display: flex; align-items: center; gap: 5px; letter-spacing: .2px; }
.legend .near { letter-spacing: -.05px; }
.legend .snug { letter-spacing: -.08px; }
.sw { width: 14px; height: 14px; }
.red { background: #b60a1c; } .green { background: #309143; } .gold { background: #e39802; }
.blue { background: #91accb; } .orange { background: #f6b87e; } .pink { background: #ee9698; } .teal { background: #abd3d0; } .lime { background: #9bc794; }
.highlight { width: 146px; height: 20px; margin: 4px 0 0 3px; border: 1px solid #c8c8c8; border-radius: 2px; display: flex; align-items: center; justify-content: space-between; padding: 0 5px 0 6px; font-size: 11px; letter-spacing: -.2px; color: #929292; }
.void { width: 53px; background: #f4f4f4; }
.main-scroll { width: 17px; border-left: 1px solid #fff; }
.main-scroll i { height: 347px; background: #cdcdcd; margin-bottom: auto; width: 15px; }

.tabs { height: 31px; flex: none; display: grid; grid-template-columns: 131px 67px 200px 200px 200px 180px 102px 103px 33px 32px 32px; border: 1px solid #c9c9c9; border-width: 1px 0; background: #e5e5e5; font: 12px/29px "Open Sans", sans-serif; letter-spacing: -.05px; color: #666; white-space: nowrap; }
.tabs span { border-right: 1px solid #c9c9c9; padding-left: 5px; overflow: hidden; display: flex; align-items: center; }
.tabs span:first-child { padding-left: 10px; gap: 5px; }
.tabs span:nth-child(2) { padding-left: 1px; }
.tabs span:nth-child(7) { padding-left: 7px; gap: 5px; letter-spacing: -.25px; }
.tabs .active { padding-left: 8px; gap: 4px; background: #fafafa; color: #444; font-weight: 700; font-size: 11.7px; letter-spacing: -.2px; }
.tabs .add { padding-left: 8px; background: #ebebeb; }
.status { height: 20px; flex: none; background: #eaeaea; display: grid; grid-template-columns: 914px 127px 27px 27px 47px 71px 67px; }
.status i, .status span { border-right: 1px solid #c9c9c9; }
.status span { padding: 5px 0 0 5px; }
.status .views { padding: 4px 0 0 7px; border: 0; }

.taskbar { height: 40px; flex: none; display: flex; background: linear-gradient(90deg, #37382c, #37382c 60%, #2c2b20); color: #fff; font-family: "Open Sans", sans-serif; }
.start { width: 48px; background: #262c28; display: flex; align-items: center; justify-content: center; }
.search { width: 344px; background: #f1f1f1; border: 1px solid #bbb; color: #333; display: flex; align-items: center; gap: 10px; padding-left: 11px; font-size: 14px; letter-spacing: -.03px; }
.app { width: 49.2px; display: flex; align-items: center; justify-content: center; flex: none; }
.app.run { position: relative; }
.app.run::after { content: ""; position: absolute; bottom: 0; left: 5px; right: 5px; height: 2px; background: #76b9ed; }
.app.active { background: #5c5d54; }
.app.active::after { left: 0; right: 0; }
.tray { margin-left: auto; width: 330px; display: grid; grid-template-columns: 33px 46px 24px 24px 22px 25px 38px 75px 1fr; align-items: center; padding-left: 1px; white-space: nowrap; }
.temp { font-size: 13px; }
.lang { font-size: 12px; letter-spacing: -.4px; padding-left: 2px; }
.clock { width: 60px; font-size: 11.5px; line-height: 18px; text-align: center; letter-spacing: -.2px; }
.badge { font: 12px "Open Sans", sans-serif; fill: #fff; }

.inset { position: absolute; left: 901px; top: 426px; width: 204px; height: 204px; padding: 5px; border: 1px solid #60748c; background: #fff; }
.inset svg { overflow: hidden; }
.watermark { position: absolute; left: 991px; top: 603px; color: rgba(140, 140, 140, .6); font-family: "Open Sans", sans-serif; white-space: nowrap; }
.watermark p { font-size: 19px; line-height: 26px; letter-spacing: .05px; }
.watermark small { display: block; font-size: 14px; line-height: 18px; letter-spacing: .1px; }
```
